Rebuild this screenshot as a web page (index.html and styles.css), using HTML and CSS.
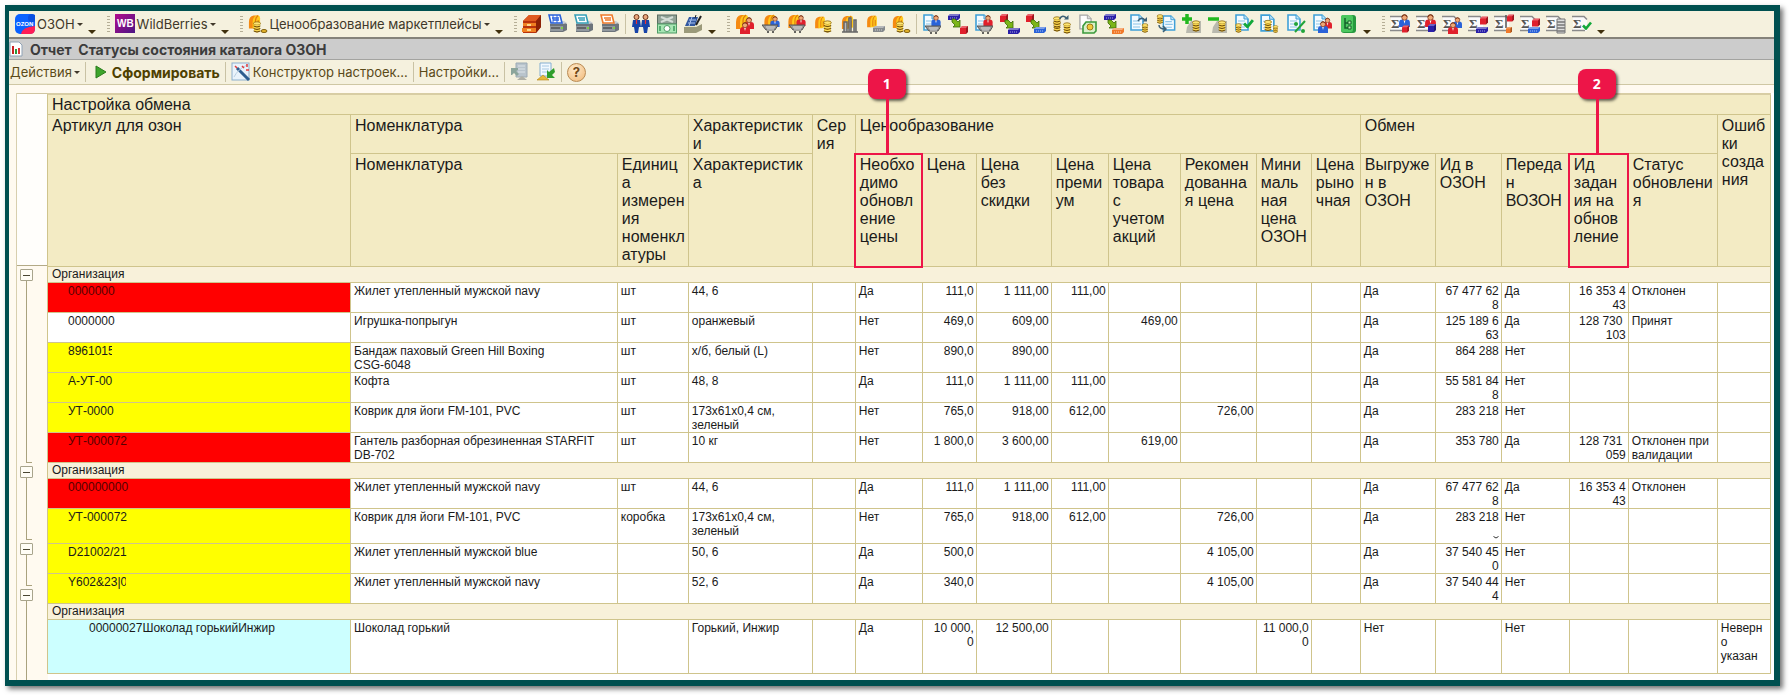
FILE: index.html
```html
<!DOCTYPE html>
<html lang="ru">
<head>
<meta charset="UTF-8">
<meta name="viewport" content="width=device-width, initial-scale=1.0">
<title>Отчет Статусы состояния каталога ОЗОН</title>
<link rel="stylesheet" href="styles.css">
</head>
<body>

<!-- Shared icon parts -->
<svg class="sprite" aria-hidden="true">
  <symbol id="doc" viewBox="0 0 14 17"><path d="M1 1h8l4 4v11H1z" fill="#f4fbff" stroke="#3fa0d8" stroke-width="1.6"/><path d="M9 1v4h4" fill="#bfe3f7" stroke="#3fa0d8"/><path d="M3 7h7M3 10h8M3 13h7" stroke="#8cc4e6" stroke-width="1.2"/></symbol>
  <symbol id="page" viewBox="0 0 14 17"><path d="M1 1h8l4 4v11H1z" fill="#fdfdfd" stroke="#a5a5a5" stroke-width="1.4"/><path d="M9 1v4h4" fill="#ddd" stroke="#a5a5a5"/></symbol>
  <symbol id="sigma" viewBox="0 0 18 18"><path d="M1 1h11l3 3v12H1z" fill="#fafafa"/><path d="M0 1.500h12l3 3M0 15.500h13" fill="none" stroke="#8a8a8a" stroke-width="1.5"/><text x="1" y="13" class="sigma-text">Σ</text></symbol>
  <symbol id="vault" viewBox="0 0 14 16"><path d="M1 15V8q0-6 5-7h5q-5 2-5 8v6z" fill="#f58a12"/><path d="M5 14V8q0-5 4-7h2q2 0 2 3v9l-3 2H5z" fill="#ffc91c"/><path d="M8 14V7q0-4 3-6M11 13V6" fill="none" stroke="#e07a0c" stroke-width="1.2"/></symbol>
  <symbol id="stack" viewBox="0 0 8 12"><path d="M1 2.500v8q3 2 6 0v-8z" fill="#c9971c"/><ellipse cx="4" cy="2.500" rx="3.500" ry="1.700" fill="#ffe673" stroke="#8e6a10" stroke-width=".8"/><path d="M.6 5q3.400 2 6.800 0M.6 7.500q3.400 2 6.800 0M.6 10q3.400 2 6.800 0" fill="none" stroke="#6f5310"/><path d="M1 4q3 1.500 6 0M1 6.500q3 1.500 6 0M1 9q3 1.500 6 0" fill="none" stroke="#ffdf5a"/></symbol>
  <symbol id="person" viewBox="0 0 10 12"><path d="M0 12V8q0-3 3-3h4q3 0 3 3v4z" fill="currentColor"/><path d="M4 5h2l-1 4z" fill="#fff"/><circle cx="5" cy="3.200" r="2.500" fill="#f0a878" stroke="#7d3518" stroke-width=".7"/><path d="M2.500 2.500Q5-1 7.500 2.500" fill="none" stroke="#7d3518"/></symbol>
  <symbol id="cart" viewBox="0 0 16 9"><path d="M0 1h16l-3 5H4z" fill="#999" stroke="#555"/><path d="M4 3h9M5 5h7" stroke="#ddd"/><circle cx="6" cy="8" r="1" fill="#333"/><circle cx="11" cy="8" r="1" fill="#333"/></symbol>
  <symbol id="arrow" viewBox="0 0 10 10"><path d="M1 1h3l3 3 2-2v7H2l2-2-3-3z" fill="#7cb518" stroke="#3b6b08" stroke-width=".8"/></symbol>
  <symbol id="cube" viewBox="0 0 8 8"><path d="M0 2l2-2h6v6L6 8H0z" fill="currentColor"/><path d="M0 2l2-2h6L6 2z" fill="#fff" opacity=".3"/><path d="M6 2l2-2v6L6 8z" fill="#000" opacity=".3"/></symbol>
  <symbol id="slab" viewBox="0 0 12 6"><path d="M0 2l2-2h10v4l-2 2H0z" fill="currentColor"/><path d="M0 2l2-2h10l-2 2z" fill="#fff" opacity=".4"/><path d="M2 4h7" stroke="#fff" opacity=".6" stroke-dasharray="1 1"/></symbol>
  <symbol id="printer" viewBox="0 0 20 20"><path d="M2 10l4-2h10l3 2v6l-4 2H2z" fill="#6d747b"/><path d="M2 10h13l4-1-3-2H5z" fill="#c9ced3"/><path d="M2 12h13v5H2z" fill="#91989e"/><path d="M3 14h9" stroke="#333"/><path d="M13 14h2" stroke="#7be028" stroke-width="1.500"/><path d="M1 1h11l2 8H3z" fill="#fff" stroke="currentColor" stroke-width="1.600"/><path d="M4 4h7M5 6h6" stroke="currentColor" stroke-width="1.300"/></symbol>
  <symbol id="check" viewBox="0 0 10 8"><path d="M1 4l3 3 5-6" fill="none" stroke="#12a83a" stroke-width="2.600"/></symbol>
  <symbol id="turn" viewBox="0 0 9 7"><path d="M0 4q3-5 7-1" fill="none" stroke="#3d6076" stroke-width="1.500"/><path d="M4.500 4.500h4.500V0z" fill="#3d6076"/></symbol>
</svg>

<div class="frame">

  <div class="toolbar">
    <div class="group">
      <button class="menu" type="button">
        <svg class="icon" viewBox="0 0 20 20"><rect width="20" height="20" rx="5" fill="#0a62ff"/><path d="M6 20q1-7 14-8v3q0 5-5 5z" fill="#ff1d55"/><circle cx="17" cy="4" r="4" fill="#0a4fe0"/><text x="1" y="12" class="ozon-text">OZON</text></svg>
        ОЗОН<i class="caret"></i>
      </button>
      <button class="more" type="button" aria-label="Ещё"></button>
    </div>
    <div class="group">
      <span class="grip"></span>
      <button class="menu" type="button">
        <svg class="icon" viewBox="0 0 20 20"><defs><linearGradient id="wb" x2="1" y2="1"><stop stop-color="#b30c8c"/><stop offset="1" stop-color="#4b1684"/></linearGradient></defs><rect width="20" height="19" fill="url(#wb)"/><text x="2" y="13" class="wb-text">WB</text></svg>
        WildBerries<i class="caret"></i>
      </button>
      <button class="more" type="button" aria-label="Ещё"></button>
    </div>
    <div class="group">
      <span class="grip"></span>
      <button class="menu" type="button">
        <svg class="icon" viewBox="0 0 20 20"><use href="#vault" x="0" y="0" width="13" height="16"/><use href="#stack" x="5" y="7" width="8" height="12"/><ellipse cx="16" cy="17" rx="3" ry="1.500" fill="#e8b62a" stroke="#80600f"/></svg>
        Ценообразование маркетплейсы<i class="caret"></i>
      </button>
      <button class="more" type="button" aria-label="Ещё"></button>
    </div>

    <div class="group">
      <span class="grip"></span>
      <div class="icons">
        <svg class="icon" viewBox="0 0 20 20"><path d="M1 7l6-6h12v12l-5 6H1z" fill="#b8320c"/><path d="M1 7l6-6h12l-5 6z" fill="#df5a20"/><path d="M14 7l5-6v12l-5 6z" fill="#8c2206"/><path d="M1 9h13v3H1zM0 14h14v4H0z" fill="#f08022"/><path d="M5 11h4M5 16h4" stroke="#fff3b0" stroke-width="1.500"/></svg>
        <svg class="icon c-blue" viewBox="0 0 20 20"><use href="#printer" width="20" height="20"/><path d="M5 1v8M9 1v8" stroke="#2a62e8"/></svg>
        <svg class="icon c-teal" viewBox="0 0 20 20"><use href="#printer" width="20" height="20"/></svg>
        <svg class="icon c-orange" viewBox="0 0 20 20"><use href="#printer" width="20" height="20"/></svg>
      </div>
      <span class="sep"></span>
      <div class="icons">
        <svg class="icon" viewBox="0 0 20 20"><path d="M2 6h7l1 7H8l-1 6H4l-1-6H1zM11 6h7l1 7h-2l-1 6h-3l-1-6h-2z" fill="#1743a8"/><circle cx="5.500" cy="3" r="2.500" fill="#e9a67c" stroke="#6b3519"/><circle cx="14.500" cy="3" r="2.500" fill="#e9a67c" stroke="#6b3519"/><path d="M5.500 6v4M14.500 6v4" stroke="#e33" stroke-width="1.200"/></svg>
        <svg class="icon" viewBox="0 0 20 20"><rect x=".5" y="1" width="19" height="9" fill="#90a296" stroke="#5c6d62"/><path d="M4 3l12 5M16 3L4 8" stroke="#d5ded8" stroke-width="2"/><rect x=".5" y="10" width="19" height="9" fill="#a8e6b4" stroke="#4f9c66"/><circle cx="10" cy="14.500" r="3" fill="#fff" stroke="#4f9c66"/><path d="M3 12v5M17 12v5" stroke="#3d9a5b" stroke-width="1.500"/></svg>
        <svg class="icon" viewBox="0 0 20 20"><path d="M1 13h12l6-3v6l-6 3H1z" fill="#9b9a7a"/><path d="M2 13h10l6-4H8z" fill="#e7e5c7"/><path d="M6 3h9l-3 9H2z" fill="#31579f"/><path d="M6 6h7M5 9h7M9 3L6 12" stroke="#aac2ee"/><path d="M18 2l-5 9" stroke="#222" stroke-width="2"/><path d="M13 1l-1 3" stroke="#222"/></svg>
      </div>
      <button class="more" type="button" aria-label="Ещё"></button>
    </div>

    <div class="group">
      <span class="grip"></span>
      <div class="icons">
        <svg class="icon" viewBox="0 0 20 20"><use href="#vault" width="14" height="16"/><use href="#person" class="c-red" x="9" y="3" width="10" height="12"/><use href="#person" class="c-red" x="5" y="8" width="10" height="12"/></svg>
        <svg class="icon" viewBox="0 0 20 20"><use href="#vault" x="2" width="14" height="15"/><use href="#person" class="c-blue" x="9" y="2" width="10" height="11"/><use href="#cart" x="1" y="10" width="16" height="9"/></svg>
        <svg class="icon" viewBox="0 0 20 20"><use href="#vault" x="0" width="14" height="15"/><use href="#person" class="c-red" x="9" y="1" width="10" height="11"/><use href="#cart" x="2" y="10" width="16" height="9"/></svg>
        <svg class="icon" viewBox="0 0 20 20"><use href="#vault" x="1" y="2" width="12" height="13"/><use href="#stack" x="10" y="6" width="9" height="13"/></svg>
        <svg class="icon" viewBox="0 0 20 20"><use href="#vault" x="2" y="1" width="13" height="15"/><path d="M5 18V8h3v10M10 18V4h2v14M15 18V6h2v12M3 18h16" stroke="#666" stroke-width="1.500" fill="#bbb"/></svg>
        <svg class="icon" viewBox="0 0 20 20"><use href="#vault" x="1" y="1" width="12" height="13"/><use href="#slab" class="c-gray" x="8" y="12" width="12" height="6"/></svg>
        <svg class="icon" viewBox="0 0 20 20"><use href="#vault" x="1" y="1" width="12" height="14"/><use href="#stack" x="5" y="7" width="8" height="12"/><ellipse cx="16" cy="17" rx="3" ry="1.500" fill="#e8b62a" stroke="#80600f"/></svg>
      </div>
      <span class="sep"></span>
      <div class="icons">
        <svg class="icon" viewBox="0 0 20 20"><use href="#doc" x="1" y="0" width="14" height="17"/><use href="#person" class="c-blue" x="9" y="1" width="10" height="11"/><use href="#cart" x="3" y="11" width="16" height="9"/></svg>
        <svg class="icon" viewBox="0 0 20 20"><use href="#slab" class="c-navy" x="0" y="0" width="12" height="6"/><use href="#arrow" x="3" y="4" width="10" height="10"/><use href="#cube" class="c-red" x="12" y="12" width="8" height="8"/></svg>
        <svg class="icon" viewBox="0 0 20 20"><use href="#doc" x="1" y="0" width="14" height="17"/><use href="#person" class="c-red" x="9" y="1" width="10" height="11"/><use href="#cart" x="3" y="11" width="16" height="9"/></svg>
        <svg class="icon" viewBox="0 0 20 20"><use href="#cube" class="c-red" width="8" height="8"/><use href="#arrow" x="4" y="5" width="10" height="10"/><use href="#slab" class="c-navy" x="8" y="14" width="12" height="6"/></svg>
        <svg class="icon" viewBox="0 0 20 20"><use href="#cube" class="c-red" width="8" height="8"/><use href="#arrow" x="4" y="5" width="10" height="10"/><use href="#slab" class="c-blue" x="8" y="13" width="12" height="6"/></svg>
        <svg class="icon" viewBox="0 0 20 20"><use href="#stack" x="1" y="6" width="8" height="12"/><use href="#stack" x="1" y="2" width="8" height="12"/><use href="#stack" x="11" y="8" width="8" height="12"/><use href="#turn" x="7" y="1" width="10" height="7"/></svg>
        <svg class="icon" viewBox="0 0 20 20"><use href="#page" x="1" y="0" width="13" height="16"/><path d="M5 12l3-4h10v9l-2 2H5z" fill="#d8efc8" stroke="#3b9a3b" stroke-width="1.600"/><circle cx="12" cy="13" r="3" fill="#f2c83a" stroke="#9b7a17"/></svg>
        <svg class="icon" viewBox="0 0 20 20"><use href="#slab" class="c-navy" width="12" height="6"/><use href="#arrow" x="3" y="5" width="10" height="10"/><use href="#slab" class="c-orange" x="8" y="14" width="12" height="6"/></svg>
        <svg class="icon" viewBox="0 0 20 20"><use href="#doc" x="0" y="0" width="14" height="17"/><use href="#turn" x="7" y="3" width="11" height="7"/><use href="#stack" x="11" y="9" width="8" height="10"/></svg>
        <svg class="icon" viewBox="0 0 20 20"><use href="#doc" x="6" y="1" width="14" height="16"/><use href="#stack" x="0" y="0" width="8" height="10"/><path d="M3 11q0 4 6 4M7 12l3 3-3 3" fill="none" stroke="#3d6076" stroke-width="1.500"/></svg>
        <svg class="icon" viewBox="0 0 20 20"><path d="M5 13l4-6h10v12H4z" fill="#b9b9ae"/><use href="#stack" x="10" y="6" width="8" height="12"/><path d="M5 0v10M0 5h10" stroke="#22b81f" stroke-width="3.500"/></svg>
        <svg class="icon" viewBox="0 0 20 20"><path d="M5 13l4-6h10v12H4z" fill="#b9b9ae"/><use href="#stack" x="10" y="6" width="8" height="12"/><path d="M0 5h11" stroke="#22b81f" stroke-width="3.500"/></svg>
        <svg class="icon" viewBox="0 0 20 20"><use href="#doc" x="1" y="0" width="14" height="17"/><use href="#stack" x="1" y="9" width="7" height="10"/><use href="#check" x="9" y="5" width="11" height="9"/></svg>
        <svg class="icon" viewBox="0 0 20 20"><use href="#doc" x="0" y="0" width="15" height="18"/><use href="#stack" x="4" y="5" width="8" height="13"/><use href="#stack" x="12" y="11" width="7" height="8"/></svg>
        <svg class="icon" viewBox="0 0 20 20"><use href="#doc" x="1" y="0" width="14" height="17"/><path d="M19 7L9 18" stroke="#21a43a" stroke-width="2"/><circle cx="10" cy="10" r="2" fill="#21a43a"/><circle cx="17" cy="17" r="2" fill="#21a43a"/></svg>
        <svg class="icon" viewBox="0 0 20 20"><use href="#doc" x="1" y="0" width="14" height="17"/><use href="#person" class="c-red" x="11" y="3" width="9" height="12"/><use href="#person" class="c-blue" x="6" y="7" width="10" height="12"/></svg>
        <svg class="icon" viewBox="0 0 20 20"><rect x="3" y="1" width="15" height="18" rx="3" fill="#27993f"/><rect x="3" y="1" width="12" height="17" rx="2" fill="#4cc75f"/><path d="M7 4v10h4M7 9h4" fill="none" stroke="#14602b" stroke-width="1.500"/><path d="M10 7h3v3h-3zM10 12h3v3h-3z" fill="#bff5b5" stroke="#14602b"/></svg>
      </div>
      <button class="more" type="button" aria-label="Ещё"></button>
    </div>

    <div class="group">
      <span class="grip"></span>
      <div class="icons">
        <svg class="icon" viewBox="0 0 20 20"><use href="#sigma" y="1" width="18" height="18"/><use href="#person" class="c-blue" x="9" y="0" width="11" height="13"/><use href="#cube" class="c-red" x="12" y="11" width="7" height="8"/></svg>
        <svg class="icon" viewBox="0 0 20 20"><use href="#sigma" y="1" width="18" height="18"/><use href="#person" class="c-red" x="9" y="0" width="11" height="13"/><use href="#cube" class="c-navy" x="12" y="10" width="8" height="8"/></svg>
        <svg class="icon" viewBox="0 0 20 20"><use href="#sigma" y="1" width="18" height="18"/><use href="#person" class="c-blue" x="11" y="3" width="9" height="11"/><use href="#person" class="c-red" x="6" y="8" width="10" height="12"/></svg>
        <svg class="icon" viewBox="0 0 20 20"><use href="#sigma" y="1" width="18" height="18"/><use href="#cube" class="c-red" x="12" y="2" width="8" height="9"/><use href="#slab" class="c-navy" x="8" y="13" width="12" height="6"/></svg>
        <svg class="icon" viewBox="0 0 20 20"><use href="#sigma" y="1" width="18" height="18"/><path d="M12 1v13" stroke="#555" stroke-width="1.500"/><use href="#cube" class="c-red" x="13" y="0" width="7" height="8"/><use href="#cube" class="c-orange" x="11" y="13" width="8" height="6"/></svg>
        <svg class="icon" viewBox="0 0 20 20"><use href="#sigma" y="1" width="18" height="18"/><use href="#cube" class="c-red" x="12" y="4" width="8" height="9"/><use href="#slab" class="c-blue" x="8" y="13" width="12" height="6"/></svg>
        <svg class="icon" viewBox="0 0 20 20"><use href="#sigma" y="1" width="18" height="18"/><path d="M11 5h8v14h-8z" fill="#ddd" stroke="#777"/><path d="M11 8h8M11 11h8M11 14h8M11 17h8" stroke="#777" stroke-width="1.300"/></svg>
        <svg class="icon" viewBox="0 0 20 20"><use href="#sigma" y="1" width="18" height="18"/><use href="#check" x="10" y="7" width="10" height="9"/></svg>
      </div>
      <button class="more" type="button" aria-label="Ещё"></button>
    </div>
  </div>

  <h1 class="title">
    <svg class="title-icon" viewBox="0 0 14 16"><path d="M1 1h9l3 3v11H1z" fill="#fff" stroke="#8fa2b5"/><path d="M4 13V5" stroke="#c22" stroke-width="2"/><path d="M7 13V8" stroke="#2a9a3c" stroke-width="2"/><path d="M10 13V7" stroke="#d33" stroke-width="2"/></svg>
    <span>Отчет&nbsp; Статусы состояния каталога ОЗОН</span>
  </h1>

  <div class="toolbar actions">
    <button class="menu" type="button">Действия<i class="caret"></i></button>
    <span class="sep"></span>
    <button class="menu run" type="button">
      <svg class="run-icon" viewBox="0 0 12 14"><path d="M1 1l10 6-10 6z" fill="#3da52c" stroke="#2b7d1e"/></svg>
      Сформировать
    </button>
    <span class="sep"></span>
    <button class="menu" type="button">
      <svg class="icon" viewBox="0 0 20 20"><rect x="1" y="1" width="17" height="17" fill="#eaf3fb" stroke="#8db0cd"/><path d="M6 6l12 12" stroke="#2e5d8f" stroke-width="3"/><path d="M3 15q4-8 13-12" fill="none" stroke="#b9cfe2"/><path d="M11 4l2 2M16 2v3M15 8h3M4 4l2 2" stroke="#e23b3b" stroke-width="1.500"/></svg>
      Конструктор настроек...
    </button>
    <span class="sep"></span>
    <button class="menu" type="button">Настройки...</button>
    <span class="sep"></span>
    <div class="icons">
      <svg class="icon" viewBox="0 0 20 20"><path d="M6 1h11v14H6z" fill="#b9c4cc" stroke="#9caab4"/><path d="M8 4h7M8 7h7M8 10h7" stroke="#dde4e8"/><path d="M1 6h7v2L6 9l3 3-2 2-3-3-2 2H1z" fill="#8ba59b"/><path d="M7 18l5-4 5 4z" fill="#b0b0a6"/></svg>
      <svg class="icon" viewBox="0 0 20 20"><path d="M4 1h11v13H4z" fill="#f2f9ff" stroke="#85aed0"/><path d="M6 4h7M6 7h7M6 10h5" stroke="#a7c8e2"/><path d="M18 6l-5 4-2-2v8h8l-3-3 3-3z" fill="#2f9e2c"/><path d="M1 18l6-5 6 5z" fill="#e8b83a" stroke="#b58517" stroke-width=".6"/></svg>
    </div>
    <span class="sep"></span>
    <button class="help" type="button">?</button>
  </div>

  <div class="sheet">
    <div class="outline">
      <div class="outline-head"></div>
      <div class="node"><button class="toggle" type="button" aria-label="Свернуть"></button><span class="stem"></span></div>
      <div class="node"><button class="toggle" type="button" aria-label="Свернуть"></button><span class="stem"></span></div>
      <div class="node"><button class="toggle" type="button" aria-label="Свернуть"></button><span class="stem"></span></div>
      <div class="node"><button class="toggle" type="button" aria-label="Свернуть"></button><span class="stem"></span></div>
    </div>

    <table class="report">
      <colgroup>
        <col class="w-article"><col><col class="w-unit"><col class="w-char"><col class="w-series">
        <col class="w-need"><col class="w-price"><col class="w-base"><col class="w-premium"><col class="w-promo">
        <col class="w-rec"><col class="w-min"><col class="w-market"><col class="w-base"><col class="w-id">
        <col class="w-sent"><col class="w-task"><col class="w-status"><col class="w-errors">
      </colgroup>
      <thead>
        <tr><th colspan="19">Настройка обмена</th></tr>
        <tr class="sections">
          <th rowspan="2">Артикул для озон</th>
          <th colspan="2">Номенклатура</th>
          <th>Характеристики</th>
          <th rowspan="2">Серия</th>
          <th colspan="8">Ценообразование</th>
          <th colspan="5">Обмен</th>
          <th rowspan="2">Ошибки создания</th>
        </tr>
        <tr class="fields">
          <th>Номенклатура</th>
          <th>Единица измерения номенклатуры</th>
          <th>Характеристика</th>
          <th class="marked">Необхо<wbr>димо обновл<wbr>ение цены<span class="callout">1</span></th>
          <th>Цена</th>
          <th>Цена без скидки</th>
          <th>Цена премиум</th>
          <th>Цена товара<br>с учетом акций</th>
          <th>Рекомендованная цена</th>
          <th>Мини<wbr>маль<wbr>ная цена ОЗОН</th>
          <th>Цена рыночная</th>
          <th>Выгружен в ОЗОН</th>
          <th>Ид в ОЗОН</th>
          <th>Передан ВОЗОН</th>
          <th class="marked">Ид задан<wbr>ия на обнов<wbr>ление<span class="callout">2</span></th>
          <th>Статус обновлени<wbr>я</th>
        </tr>
      </thead>
      <tbody>
        <tr class="org"><td colspan="19">Организация</td></tr>
        <tr><td class="art red">0000000</td><td>Жилет утепленный мужской navy</td><td>шт</td><td>44, 6</td><td></td><td>Да</td><td class="num">111,0</td><td class="num">1&nbsp;111,00</td><td class="num">111,00</td><td></td><td></td><td></td><td></td><td>Да</td><td class="num">67&nbsp;477&nbsp;62<wbr>8</td><td>Да</td><td class="num">16&nbsp;353&nbsp;4<wbr>43</td><td>Отклонен</td><td></td></tr>
        <tr><td class="art">0000000</td><td>Игрушка-попрыгун</td><td>шт</td><td>оранжевый</td><td></td><td>Нет</td><td class="num">469,0</td><td class="num">609,00</td><td></td><td class="num">469,00</td><td></td><td></td><td></td><td>Да</td><td class="num">125&nbsp;189&nbsp;6<wbr>63</td><td>Да</td><td class="num">128&nbsp;730&nbsp;<wbr>103</td><td>Принят</td><td></td></tr>
        <tr><td class="art yellow"><span class="cut">8961015</span></td><td>Бандаж паховый Green Hill Boxing<br>CSG-6048</td><td>шт</td><td>х/б, белый (L)</td><td></td><td>Нет</td><td class="num">890,0</td><td class="num">890,00</td><td></td><td></td><td></td><td></td><td></td><td>Да</td><td class="num">864&nbsp;288</td><td>Нет</td><td></td><td></td><td></td></tr>
        <tr><td class="art yellow">А-УТ-00</td><td>Кофта</td><td>шт</td><td>48, 8</td><td></td><td>Да</td><td class="num">111,0</td><td class="num">1&nbsp;111,00</td><td class="num">111,00</td><td></td><td></td><td></td><td></td><td>Да</td><td class="num">55&nbsp;581&nbsp;84<wbr>8</td><td>Нет</td><td></td><td></td><td></td></tr>
        <tr><td class="art yellow">УТ-0000</td><td>Коврик для йоги FM-101, PVC</td><td>шт</td><td>173х61х0,4 см, зеленый</td><td></td><td>Нет</td><td class="num">765,0</td><td class="num">918,00</td><td class="num">612,00</td><td></td><td class="num">726,00</td><td></td><td></td><td>Да</td><td class="num">283&nbsp;218</td><td>Нет</td><td></td><td></td><td></td></tr>
        <tr><td class="art red">УТ-000072</td><td>Гантель разборная обрезиненная STARFIT DB-702</td><td>шт</td><td>10 кг</td><td></td><td>Нет</td><td class="num">1&nbsp;800,0</td><td class="num">3&nbsp;600,00</td><td></td><td class="num">619,00</td><td></td><td></td><td></td><td>Да</td><td class="num">353&nbsp;780</td><td>Да</td><td class="num">128&nbsp;731&nbsp;<wbr>059</td><td>Отклонен при валидации</td><td></td></tr>
        <tr class="org"><td colspan="19">Организация</td></tr>
        <tr><td class="art red">000000000</td><td>Жилет утепленный мужской navy</td><td>шт</td><td>44, 6</td><td></td><td>Да</td><td class="num">111,0</td><td class="num">1&nbsp;111,00</td><td class="num">111,00</td><td></td><td></td><td></td><td></td><td>Да</td><td class="num">67&nbsp;477&nbsp;62<wbr>8</td><td>Да</td><td class="num">16&nbsp;353&nbsp;4<wbr>43</td><td>Отклонен</td><td></td></tr>
        <tr class="tall"><td class="art yellow">УТ-000072</td><td>Коврик для йоги FM-101, PVC</td><td>коробка</td><td>173х61х0,4 см, зеленый</td><td></td><td>Нет</td><td class="num">765,0</td><td class="num">918,00</td><td class="num">612,00</td><td></td><td class="num">726,00</td><td></td><td></td><td>Да</td><td class="num">283&nbsp;218<svg class="tail" viewBox="0 0 6 3"><path d="M.5 .5q2.500 3 5 0" fill="none" stroke="#333"/></svg></td><td>Нет</td><td></td><td></td><td></td></tr>
        <tr><td class="art yellow">D21002/21</td><td>Жилет утепленный мужской blue</td><td></td><td>50, 6</td><td></td><td>Да</td><td class="num">500,0</td><td></td><td></td><td></td><td class="num">4&nbsp;105,00</td><td></td><td></td><td>Да</td><td class="num">37&nbsp;540&nbsp;45<wbr>0</td><td>Нет</td><td></td><td></td><td></td></tr>
        <tr><td class="art yellow"><span class="cut wide">Y602&amp;23|0</span></td><td>Жилет утепленный мужской navy</td><td></td><td>52, 6</td><td></td><td>Да</td><td class="num">340,0</td><td></td><td></td><td></td><td class="num">4&nbsp;105,00</td><td></td><td></td><td>Да</td><td class="num">37&nbsp;540&nbsp;44<wbr>4</td><td>Нет</td><td></td><td></td><td></td></tr>
        <tr class="org"><td colspan="19">Организация</td></tr>
        <tr class="last"><td class="art nested cyan">00000027Шоколад горькийИнжир</td><td>Шоколад горький</td><td></td><td>Горький, Инжир</td><td></td><td>Да</td><td class="num">10&nbsp;000,<br>0</td><td class="num">12&nbsp;500,00</td><td></td><td></td><td></td><td class="num">11&nbsp;000,0<wbr>0</td><td></td><td>Нет</td><td></td><td>Нет</td><td></td><td></td><td>Неверн<wbr>о указан</td></tr>
      </tbody>
    </table>
  </div>

</div>

</body>
</html>
```
FILE: styles.css
```css
* {
  box-sizing: border-box;
}

body {
  margin: 0;
  padding: 5px 9px 9px 5px;
  background-color: #fff;
  font-family: "Liberation Sans", Arial, sans-serif;
  font-size: 12px;
  color: #1a1a1a;
}

button {
  padding: 0;
  border: 0;
  background: none;
  font: inherit;
  color: inherit;
  cursor: pointer;
}

.sprite {
  position: absolute;
  width: 0;
  height: 0;
}

.frame {
  display: flex;
  flex-direction: column;
  min-height: calc(100vh - 14px);
  border: 6px solid #005050;
  border-left-width: 4px;
  background-color: #fffaf0;
  box-shadow: 3px 3px 5px rgba(0, 0, 0, 0.55);
}

/* Toolbars */
.toolbar {
  display: flex;
  align-items: center;
  height: 28px;
  padding-left: 6px;
  background-color: #f5f1de;
  border-bottom: 2px solid #85827a;
  font-family: Inter, "Liberation Sans", sans-serif;
  font-size: 13px;
  color: #40382a;
}

.group {
  display: flex;
  align-items: center;
  gap: 5px;
  margin-right: 11px;
}

.icons {
  display: flex;
  gap: 6px;
}

.icon {
  display: block;
  flex: none;
  width: 20px;
  height: 20px;
}

.menu {
  display: flex;
  align-items: center;
  gap: 2px;
  white-space: nowrap;
}

.caret {
  border: 3px solid transparent;
  border-top-color: #40382a;
  border-bottom: 0;
}

.more {
  align-self: flex-end;
  border: 4px solid transparent;
  border-top-color: #40300c;
  border-bottom: 0;
}

.grip {
  width: 3px;
  height: 16px;
  background: repeating-linear-gradient(#b5ae96 0 1px, transparent 1px 3px);
}

.sep {
  width: 1px;
  height: 20px;
  background-color: #c9c2a4;
}

.c-red { color: #e0202c; }
.c-blue { color: #2a62d8; }
.c-navy { color: #2a1fa8; }
.c-teal { color: #35a0b8; }
.c-orange { color: #f07a2a; }
.c-gray { color: #85898c; }

.sigma-text {
  font: bold 13px "Liberation Serif", serif;
  fill: #555;
}

.ozon-text {
  font: bold 6px "Liberation Sans", sans-serif;
  fill: #fff;
}

.wb-text {
  font: bold 10px "Liberation Sans", sans-serif;
  fill: #fff;
}

.title {
  display: flex;
  align-items: center;
  gap: 7px;
  height: 21px;
  margin: 0;
  background-color: #ccc;
  border-bottom: 1px solid #a3a3a0;
  font-family: Inter, "Liberation Sans", sans-serif;
  font-size: 14px;
  font-weight: bold;
  color: #3c3c3c;
}

.title-icon {
  width: 14px;
  height: 16px;
}

.actions {
  gap: 5px;
  height: 25px;
  padding-left: 1px;
  border-bottom: 1px solid #cfc7a4;
  color: #5a4a18;
}

.run {
  margin-left: 4px;
  font-size: 14px;
  font-weight: bold;
  color: #4e4000;
}

.run-icon {
  width: 12px;
  height: 14px;
  margin-right: 3px;
}

.help {
  width: 19px;
  height: 19px;
  border: 1px solid #b98a52;
  border-radius: 50%;
  background: radial-gradient(circle at 40% 30%, #ffe9c8, #f0b878);
  font-weight: bold;
  line-height: 15px;
  color: #704818;
}

/* Report */
.sheet {
  display: flex;
  flex: 1;
  margin: 8px 0 0 7px;
  padding-right: 3px;
  background: linear-gradient(#fff, #fff) right / calc(100% - 31px) 100% no-repeat;
  border-left: 1px solid #d8cfae;
}

.outline {
  display: grid;
  flex: none;
  grid-template-rows: 173px 197px 77px 46px 1fr;
  width: 30px;
}

.outline-head {
  background-color: #fffefb;
  border-top: 1px solid #cfc5a0;
  border-bottom: 1px solid #b3aa87;
}

.node {
  display: flex;
  flex-direction: column;
  padding: 3px 0 0 3px;
}

.toggle {
  display: flex;
  align-items: center;
  justify-content: center;
  flex: none;
  width: 13px;
  height: 12px;
  border: 1px solid #a8a48c;
  border-radius: 1px;
  background-color: #fffdf5;
}

.toggle::before {
  content: "";
  width: 7px;
  height: 1px;
  background-color: #4a4632;
}

.stem {
  flex: 1;
  width: 6px;
  margin-left: 6px;
  border-left: 1px solid #aaa27e;
  border-bottom: 1px solid #aaa27e;
}

.node:last-child .stem {
  border-bottom: 0;
}

.report {
  flex: 1;
  align-self: flex-start;
  width: 100%;
  table-layout: fixed;
  border-collapse: separate;
  border-spacing: 0;
  border-top: 2px solid #d8cda4;
  border-left: 1px solid #cfc48c;
}

.report th,
.report td {
  border-right: 1px solid #cfc48c;
  border-bottom: 1px solid #cfc48c;
  text-align: left;
  vertical-align: top;
  overflow-wrap: break-word;
}

.report th {
  height: 20px;
  padding: 1px 3px 0 4px;
  background-color: #f3ebc4;
  font-size: 16px;
  font-weight: normal;
  line-height: 18px;
}

.report td {
  height: 30px;
  padding: 1px 3px 0;
  background-color: #fff;
  line-height: 14px;
}

.report .sections th {
  height: 39px;
  padding-top: 2px;
}

.report .fields th {
  height: 113px;
  padding-top: 2px;
}

.w-article { width: 303px; }
.w-unit { width: 71px; }
.w-char { width: 124px; }
.w-series { width: 43px; }
.w-need { width: 67px; }
.w-price { width: 54px; }
.w-base { width: 75px; }
.w-premium { width: 57px; }
.w-promo { width: 72px; }
.w-rec { width: 76px; }
.w-min { width: 55px; }
.w-market { width: 49px; }
.w-id { width: 66px; }
.w-sent { width: 68px; }
.w-task { width: 59px; }
.w-status { width: 89px; }
.w-errors { width: 53px; }

.report .org td {
  height: 16px;
  padding: 0 4px;
  background-color: #f8f1da;
}

.report .tall td { height: 35px; }
.report .last td { height: 54px; }

.report .num {
  padding-right: 2px;
  text-align: right;
}

.report .art { padding-left: 20px; }
.report .nested { padding-left: 41px; }

.report .red {
  background-color: #f00;
  color: #500;
}

.report .yellow { background-color: #ff0; }
.report .cyan { background-color: #cff; }

.cut {
  display: block;
  width: 44px;
  overflow: hidden;
  white-space: nowrap;
}

.cut.wide {
  width: 58px;
}

.tail {
  display: block;
  width: 6px;
  height: 3px;
  margin: 12px 0 0 auto;
}

/* Numbered callouts over the marked columns */
.marked {
  position: relative;
}

.marked::after {
  content: "";
  position: absolute;
  inset: -1px -1px -2px -2px;
  border: 2px solid #ed1548;
}

.callout {
  position: absolute;
  left: calc(50% - 21px);
  top: -85px;
  width: 38px;
  height: 30px;
  border-radius: 8px;
  background-color: #ed1548;
  box-shadow: 2px 2px 3px rgba(0, 0, 0, 0.6);
  font: bold 14px/30px "Open Sans", sans-serif;
  color: #fff;
  text-align: center;
}

.callout::after {
  content: "";
  position: absolute;
  top: 30px;
  left: 18px;
  width: 3px;
  height: 55px;
  background-color: #ed1548;
}
```
